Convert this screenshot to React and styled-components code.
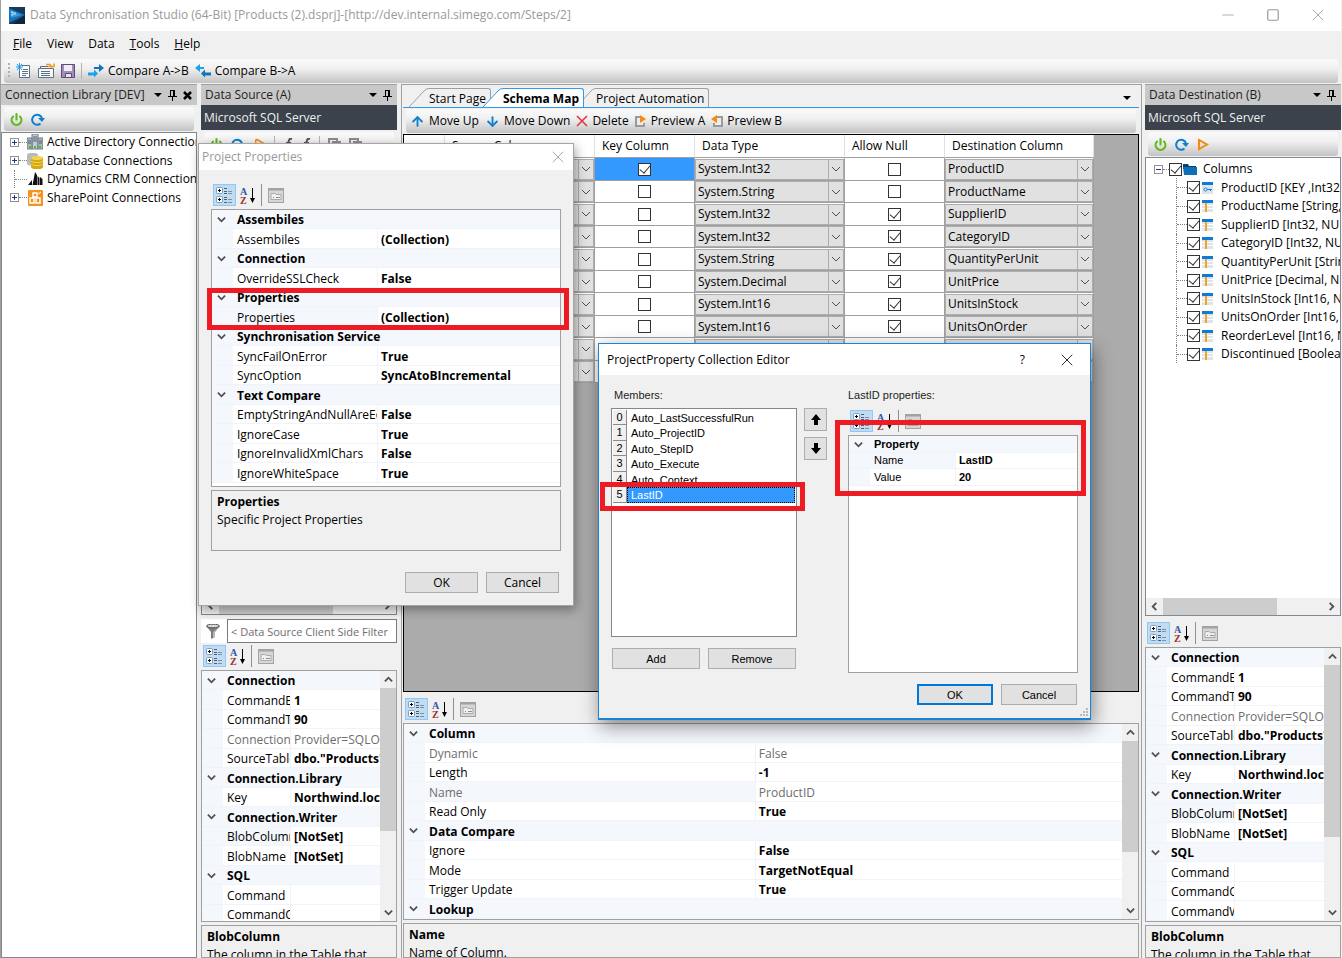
import React from 'react';
import styled, { createGlobalStyle, css } from 'styled-components';
import { Power, Play, X, Minus, Square, ArrowUp, ArrowDown } from 'lucide-react';

const GlobalStyle = createGlobalStyle`
    *{
        box-sizing: border-box;
    }
    body{
        margin: 0;
        overflow: hidden;
        background-color: #f0f0f0;
        font-family: "Open Sans", "Noto Sans", sans-serif;
        font-size: 12px;
        line-height: 16px;
        color: #000;
    }
    button, input, select{
        font: inherit;
        color: inherit;
        margin: 0;
        padding: 0;
    }
    svg{
        flex: none;
        display: block;
    }
`

/* ---------- data ---------- */

const sourceProps = [
    { group: "Connection" },
    { name: "CommandBatchSize", value: "1" },
    { name: "CommandTimeout", value: "90" },
    { name: "ConnectionString", value: "Provider=SQLOLEDB", muted: true },
    { name: "SourceTable", value: 'dbo."Products"' },
    { group: "Connection.Library" },
    { name: "Key", value: "Northwind.local" },
    { group: "Connection.Writer" },
    { name: "BlobColumn", value: "[NotSet]", selected: true },
    { name: "BlobName", value: "[NotSet]" },
    { group: "SQL" },
    { name: "Command", value: "" },
    { name: "CommandCount", value: "" },
    { name: "CommandWhere", value: "" },
];

const columnProps = [
    { group: "Column" },
    { name: "Dynamic", value: "False", muted: true },
    { name: "Length", value: "-1" },
    { name: "Name", value: "ProductID", muted: true, selected: true },
    { name: "Read Only", value: "True" },
    { group: "Data Compare" },
    { name: "Ignore", value: "False" },
    { name: "Mode", value: "TargetNotEqual" },
    { name: "Trigger Update", value: "True" },
    { group: "Lookup" },
];

const projectProps = [
    { group: "Assembiles" },
    { name: "Assembiles", value: "(Collection)" },
    { group: "Connection" },
    { name: "OverrideSSLCheck", value: "False" },
    { group: "Properties" },
    { name: "Properties", value: "(Collection)", selected: true },
    { group: "Synchronisation Service" },
    { name: "SyncFailOnError", value: "True" },
    { name: "SyncOption", value: "SyncAtoBIncremental" },
    { group: "Text Compare" },
    { name: "EmptyStringAndNullAreEqual", value: "False" },
    { name: "IgnoreCase", value: "True" },
    { name: "IgnoreInvalidXmlChars", value: "False" },
    { name: "IgnoreWhiteSpace", value: "True" },
];

const memberProps = [
    { group: "Property" },
    { name: "Name", value: "LastID", selected: true },
    { name: "Value", value: "20" },
];

const members = ["Auto_LastSuccessfulRun", "Auto_ProjectID", "Auto_StepID", "Auto_Execute", "Auto_Context", "LastID"];

const schema = [
    { name: "ProductID", type: "System.Int32", isKey: true, allowNull: false },
    { name: "ProductName", type: "System.String", allowNull: false },
    { name: "SupplierID", type: "System.Int32", allowNull: true },
    { name: "CategoryID", type: "System.Int32", allowNull: true },
    { name: "QuantityPerUnit", type: "System.String", allowNull: true },
    { name: "UnitPrice", type: "System.Decimal", allowNull: true },
    { name: "UnitsInStock", type: "System.Int16", allowNull: true },
    { name: "UnitsOnOrder", type: "System.Int16", allowNull: true },
    { name: "ReorderLevel", type: "System.Int16", allowNull: true },
    { name: "Discontinued", type: "System.Boolean", allowNull: false },
];

const destColumns = [
    "ProductID [KEY ,Int32, NOT NULL]",
    "ProductName [String, NOT NULL]",
    "SupplierID [Int32, NULL]",
    "CategoryID [Int32, NULL]",
    "QuantityPerUnit [String, NULL]",
    "UnitPrice [Decimal, NULL]",
    "UnitsInStock [Int16, NULL]",
    "UnitsOnOrder [Int16, NULL]",
    "ReorderLevel [Int16, NULL]",
    "Discontinued [Boolean, NOT NULL]",
];

/* ---------- icons ---------- */

const AppLogo = () => (
    <svg width="16" height="17" viewBox="0 0 16 17">
        <rect width="16" height="17" fill="#17395c"/>
        <path d="M0 1 L16 8 L0 16Z" fill="#1b6fb0"/>
        <path d="M1 3 L13 8 L2 11Z" fill="#2b9ade"/>
        <path d="M16 8 L16 17 L4 17Z" fill="#10263d"/>
        <path d="M2 5h2v3h-2M6 5v3" stroke="#cfe8fa" fill="none"/>
    </svg>
)

const Chevron = ({ dir = "down", size = 9, width = 2, color = "#505050" }) => {
    const d = { down: "M1 3l4 4 4-4", up: "M1 7l4-4 4 4", left: "M7 1L3 5l4 4", right: "M3 1l4 4-4 4" }[dir];
    return <svg width={size} height={size} viewBox="0 0 10 10"><path d={d} fill="none" stroke={color} strokeWidth={width}/></svg>
}

const Caret = () => <svg width="8" height="4" viewBox="0 0 8 4"><path d="M0 0h8L4 4z"/></svg>

const Pin = () => (
    <svg width="9" height="11" viewBox="0 0 9 11">
        <path d="M2 0h5v6h2v1H5v4H4V7H0V6h2zM3 1v5h2V1z" fillRule="evenodd"/>
    </svg>
)

const NewIcon = () => (
    <svg width="16" height="16" viewBox="0 0 16 16">
        <path d="M5.500 2.500h8v12h-10v-7" fill="#fff" stroke="#5d7186"/>
        <path d="M7 6.500h5M6 8.500h6M6 10.500h6M6 12.500h4" stroke="#5d7186"/>
        <path d="M3.500 0v8M0 4h7M1 1l5 6M6 1L1 7" stroke="#1e9be8"/>
    </svg>
)

const OpenIcon = () => (
    <svg width="17" height="16" viewBox="0 0 17 16">
        <path d="M2.500 6V3.500h8" fill="none" stroke="#5d7186"/>
        <path d="M.5 5.500h15v9H.5z" fill="#f8f8f8" stroke="#5d7186"/>
        <path d="M3 8.500h9M3 10.500h9M3 12.500h9" stroke="#5d7186"/>
        <path d="M8 1.500h4l2 3M11 3.500h5v-3" fill="none" stroke="#f29a1f" strokeWidth="1.500"/>
    </svg>
)

const SaveIcon = () => (
    <svg width="14" height="14" viewBox="0 0 14 14">
        <path d="M.5.5h13v13H.5z" fill="#a18db8" stroke="#5d4b73"/>
        <path d="M3 1h8v6H3z" fill="#f1edf6"/>
        <path d="M4.500 9.500h6v4h-6z" fill="#e9e4ef" stroke="#5d4b73"/>
    </svg>
)

const CompareIcon = ({ flip }) => (
    <svg width="16" height="14" viewBox="0 0 16 14">
        {flip
            ? <g><path d="M0 4l5-4v3h4v2H5v3z" fill="#1da0ef"/><path d="M6 9.500l4-4v3h6v3h-6v2z" fill="#1273b8"/></g>
            : <g><path d="M16 4l-5-4v3H6v2h5v3z" fill="#1273b8"/><path d="M10 9.500L6 5.500v3H0v3h6v2z" fill="#1da0ef"/></g>}
    </svg>
)

const PowerIcon = () => <Power size={13} strokeWidth={4} color="#62b91d"/>

const RefreshIcon = () => (
    <svg width="14" height="13" viewBox="0 0 14 13">
        <path d="M9.500 10.500a5 5 0 1 1 1.500-5" fill="none" stroke="#0d80d0" strokeWidth="2"/>
        <path d="M7 5h7l-3 4z" fill="#0d80d0"/>
    </svg>
)

const PlayIcon = () => (
    <svg width="12" height="13" viewBox="0 0 12 13">
        <path d="M2 2v9l8-4.500z" fill="none" stroke="#f58a0b" strokeWidth="2"/>
    </svg>
)

const CopyIcon = () => (
    <svg width="13" height="13" viewBox="0 0 13 13"><path d="M1 1h8v9H1zM5 4h7v8H5z" fill="none" stroke="#8c8c8c" strokeWidth="2"/></svg>
)

const HookIcon = () => (
    <svg width="10" height="13" viewBox="0 0 10 13"><path d="M9 1C6 0 6 2 5 6s-1 6-4 6M3 5h5" fill="none" stroke="#555" strokeWidth="2"/></svg>
)

const PreviewIcon = ({ flip }) => (
    <svg width="12" height="12" viewBox="0 0 12 12">
        {flip
            ? <g><path d="M6 2h5v9H3V8" fill="#ececec" stroke="#9a9a9a" strokeWidth="2"/><path d="M0 4l6-4v8z" fill="#f68b12"/></g>
            : <g><path d="M6 2H1v9h8V8" fill="#ececec" stroke="#9a9a9a" strokeWidth="2"/><path d="M11 4L5 0v8z" fill="#f68b12"/></g>}
    </svg>
)

const DeleteIcon = () => (
    <svg width="12" height="12" viewBox="0 0 12 12"><path d="M1 1l10 10M11 1L1 11" stroke="#e0343c" strokeWidth="1.500"/></svg>
)

const CategorizedIcon = () => (
    <svg width="17" height="17" viewBox="0 0 17 17">
        <rect x=".5" y=".5" width="6" height="6" rx="1" fill="#fff" stroke="#7d9dbf"/>
        <rect x=".5" y="9.500" width="6" height="6" rx="1" fill="#fff" stroke="#7d9dbf"/>
        <path d="M2 3.500h3M3.500 2v3M2 12.500h3M3.500 11v3" stroke="#000"/>
        <path d="M8 1.500h3M8 4.500h3M8 6.500h3M8 10.500h3M8 12.500h3M8 15.500h3" stroke="#4f5f70"/>
        <path d="M12 4.500h4M12 6.500h4M12 12.500h4M12 15.500h4" stroke="#7f8fa0"/>
    </svg>
)

const SortIcon = () => (
    <svg width="17" height="17" viewBox="0 0 17 17">
        <text x="0" y="8" fontSize="10" fontWeight="700" fontFamily="Liberation Serif, serif" fill="#2f55a8">A</text>
        <text x="0" y="17" fontSize="10" fontWeight="700" fontFamily="Liberation Serif, serif" fill="#9c2b2b">Z</text>
        <path d="M12.500 1v12" stroke="#000"/>
        <path d="M10 11h5l-2.500 5z"/>
    </svg>
)

const PagesIcon = () => (
    <svg width="16" height="15" viewBox="0 0 16 15">
        <rect x=".5" y=".5" width="15" height="14" fill="#d6d6d6" stroke="#a3a3a3"/>
        <path d="M0 1.500h16" stroke="#a3a3a3" strokeWidth="2"/>
        <path d="M3 5.500h4l1 1h5v5H3z" fill="#efefef" stroke="#aaa"/>
        <path d="M5 9.500h1M8 9.500h4" stroke="#8f8f8f"/>
    </svg>
)

const FunnelIcon = () => (
    <svg width="14" height="15" viewBox="0 0 14 15">
        <path d="M0 2l5 6v7l4-2V8l5-6z" fill="#7c7c7c"/>
        <path d="M7 8v6l2-1V8l4-5z" fill="#b9b9b9"/>
        <ellipse cx="7" cy="2" rx="6.500" ry="1.800" fill="#d8d8d8" stroke="#555"/>
    </svg>
)

const ServersIcon = () => (
    <svg width="16" height="16" viewBox="0 0 16 16">
        <path d="M5 0h6v15H5z" fill="#c3ccd4" stroke="#6d7a86"/>
        <path d="M0 4h5v11H0zM11 4h5v11h-5z" fill="#aab5bf" stroke="#6d7a86"/>
        <path d="M6 3h4M6 5h4M6 7h4M1 7h3M1 9h3M12 7h3M12 9h3" stroke="#51606d"/>
        <path d="M2 12h2v2H2zM7 12h2v2H7zM12 12h2v2h-2z" fill="#4bc01a"/>
    </svg>
)

const DatabaseIcon = () => (
    <svg width="16" height="16" viewBox="0 0 16 16">
        <path d="M0 2c0-3 11-3 11 0v9c0 2-11 2-11 0z" fill="#b6bdc2"/>
        <path d="M4 5c0-2 12-2 12 0v9c0 3-12 3-12 0z" fill="#d6a912"/>
        <ellipse cx="10" cy="5" rx="6" ry="2" fill="#f2d452"/>
        <path d="M4 8c1 2 11 2 12 0M4 11c1 2 11 2 12 0" fill="none" stroke="#f2d452"/>
    </svg>
)

const CrmIcon = () => (
    <svg width="15" height="14" viewBox="0 0 15 14">
        <path d="M0 13l4-5v5zM4.500 13L7 0l2 3v10zM9.500 13V4l2 2v7zM12 13V5l2.500 2v6z" fill="#111"/>
    </svg>
)

const SharePointIcon = () => (
    <svg width="15" height="16" viewBox="0 0 15 16">
        <rect width="15" height="16" rx="1" fill="#f6921e"/>
        <path d="M2 8h4v5H2zM8 8h4v5H8zM5 3h4v4H5z" fill="none" stroke="#fff" strokeWidth="1.500"/>
        <path d="M10 4l3-2" stroke="#fff"/>
    </svg>
)

const FolderIcon = () => (
    <svg width="14" height="13" viewBox="0 0 14 13">
        <path d="M0 1h5l1 2h7v3H0z" fill="#0b3f70"/>
        <path d="M0 4h14v8H1z" fill="#0f6fb8"/>
    </svg>
)

const ColumnIcon = ({ isKey }) => (
    <svg width="11" height="12" viewBox="0 0 11 12">
        <rect width="11" height="12" fill="#dfe4e6"/>
        <rect width="11" height="3" fill="#0c7bdc"/>
        {isKey
            ? <g><circle cx="3.500" cy="7.500" r="1.500" fill="#fff" stroke="#0c7bdc"/><path d="M5 7.500h5M8.500 7v2" stroke="#0c7bdc"/></g>
            : <g><path d="M0 5.500h11M0 8.500h11" stroke="#fff"/><path d="M4 3v9" stroke="#f3a41b" strokeWidth="2"/></g>}
    </svg>
)

/* ---------- shared parts ---------- */

const IconButton = styled.button`
    display: flex;
    align-items: center;
    justify-content: center;
    border: 0;
    background: none;
`

const StripBar = styled.div`
    display: flex;
    align-items: center;
    flex: none;
    gap: ${props => props.$tight ? 6 : 8}px;
    height: 24px;
    margin: ${props => props.$top || 2}px 3px 1px;
    padding: 0 ${props => props.$tight ? 4 : 6}px;
    border-radius: 3px;
    background: linear-gradient(#fafafa, #f0f0f0 40%, #c3c3c3);
`

const StripButton = styled(IconButton)`
    gap: 4px;
    white-space: nowrap;
`

const ArrowSlot = styled.span`
    width: 15px;
`

const Divider = styled.span`
    width: 1px;
    height: ${props => props.$tall ? 22 : 16}px;
    margin-right: ${props => props.$tall ? 5 : 0}px;
    background-color: ${props => props.$tall ? "#8f8f8f" : "#b4b4b4"};
`

const Grip = styled.span`
    width: 2px;
    height: 16px;
    background: repeating-linear-gradient(#b0b0b0 0 2px, transparent 2px 4px);
`

const PaneHeader = styled.header`
    display: flex;
    align-items: center;
    flex: none;
    gap: 6px;
    height: 21px;
    padding: 0 5px 0 4px;
    border-top: 1px solid #a0a0a0;
    background-color: #c8c8c8;
    color: #1e1e1e;
    h2{
        flex: 1;
        margin: 0;
        font-size: 12px;
        font-weight: 400;
        white-space: nowrap;
    }
`

const Provider = styled.div`
    flex: none;
    height: 25px;
    padding: 0 3px;
    background-color: #3b424b;
    color: #f0f0f0;
    line-height: 25px;
`

const Sunken = styled.div`
    display: flex;
    flex-direction: column;
    flex: 1;
    min-height: 0;
    overflow: hidden;
    border: 1px solid #828790;
    background-color: #fff;
`

const CheckBox = styled.input.attrs({ type: "checkbox" })`
    appearance: none;
    display: flex;
    justify-content: center;
    flex: none;
    width: 13px;
    height: 13px;
    border: 1px solid #333;
    background-color: #fff;
    &:checked::before{
        content: "";
        width: 5px;
        height: 9px;
        margin-top: -1px;
        border: solid #333;
        border-width: 0 1px 1px 0;
        transform: rotate(40deg);
    }
`

/* ---------- scroll bars ---------- */

const Track = styled.div`
    display: flex;
    flex: none;
    flex-direction: ${props => props.$across ? "row" : "column"};
    ${props => props.$across ? "height: 17px;" : "width: 16px;"}
    background-color: #f0f0f0;
`

const Arrow = styled.span`
    display: flex;
    align-items: center;
    justify-content: center;
    width: 17px;
    height: 17px;
`

const Thumb = styled.span`
    flex: 0 0 ${props => props.$part}%;
    background-color: #cdcdcd;
`

const Spacer = styled.span`
    flex: 1;
`

const ScrollBar = ({ across, part }) => (
    <Track $across={across} aria-hidden="true">
        <Arrow><Chevron dir={across ? "left" : "up"}/></Arrow>
        <Thumb $part={part}/>
        <Spacer/>
        <Arrow><Chevron dir={across ? "right" : "down"}/></Arrow>
    </Track>
)

/* ---------- property grid ---------- */

const PropBar = styled.div`
    display: flex;
    align-items: center;
    flex: none;
    gap: 1px;
    height: 27px;
    padding: 2px 2px 3px;
`

const PropButton = styled(IconButton)`
    width: 23px;
    height: 22px;
    ${props => props.$on && css`
        border: 1px solid #90c8f6;
        background-color: #c0dcf3;
    `}
`

const PropFrame = styled.div`
    display: flex;
    flex: none;
    height: ${props => props.$height}px;
    overflow: hidden;
    border: 1px solid #a0a0a0;
    background-color: #fff;
`

const PropBody = styled.div`
    flex: 1;
    min-width: 0;
    overflow: hidden;
`

const PropTable = styled.table`
    width: 100%;
    table-layout: fixed;
    border-collapse: separate;
    border-spacing: 0;
    tr{
        height: ${props => props.$compact ? 17 : 19}px;
    }
    tr:nth-child(even){
        height: ${props => props.$compact ? 16 : 20}px;
    }
    th, td{
        padding: ${props => props.$compact ? 0 : 1}px 0 0 4px;
        line-height: 15px;
        text-align: left;
        font-weight: 700;
        white-space: nowrap;
        overflow: hidden;
        border-bottom: 1px solid #f0f3f9;
    }
    .gutter{
        padding: 0 0 0 5px;
    }
`

const GroupRow = styled.tr`
    background-color: #f4f7fc;
`

const PropRow = styled.tr`
    th, td{
        color: ${props => props.$muted ? "#6d6d6d" : "#000"};
    }
    th{
        font-weight: 400;
        border-right: 1px solid #f0f3f9;
        background-color: ${props => props.$selected ? "#f4f7fc" : "#fff"};
    }
    td{
        padding-left: 3px;
        font-weight: ${props => props.$muted ? 400 : 700};
    }
    .gutter{
        background-color: #f4f7fc;
    }
`

const PropTools = () => (
    <PropBar>
        <PropButton $on aria-label="Categorized"><CategorizedIcon/></PropButton>
        <PropButton aria-label="Alphabetical"><SortIcon/></PropButton>
        <Divider $tall/>
        <IconButton aria-label="Property Pages"><PagesIcon/></IconButton>
    </PropBar>
)

const PropGrid = ({ rows, height, nameWidth, valueWidth, compact, scroll }) => (
    <PropFrame $height={height}>
        <PropBody>
            <PropTable $compact={compact}>
                <colgroup>
                    <col width="21"/>
                    <col width={nameWidth}/>
                    <col width={valueWidth}/>
                </colgroup>
                <tbody>
                    {rows.map((row, i) => row.group
                        ? <GroupRow key={i}>
                            <td className="gutter"><IconButton aria-label={`Collapse ${row.group}`}><Chevron/></IconButton></td>
                            <th colSpan="2" scope="rowgroup">{row.group}</th>
                        </GroupRow>
                        : <PropRow key={i} $muted={row.muted} $selected={row.selected}>
                            <td className="gutter"/>
                            <th scope="row">{row.name}</th>
                            <td>{row.value}</td>
                        </PropRow>
                    )}
                </tbody>
            </PropTable>
        </PropBody>
        {scroll && <ScrollBar part={scroll}/>}
    </PropFrame>
)

const HelpBox = styled.section`
    flex: none;
    height: ${props => props.$height}px;
    margin-top: 3px;
    padding: 2px 5px;
    overflow: hidden;
    border: 1px solid #a0a0a0;
    h3, p{
        margin: 0;
        font-size: 12px;
        line-height: 18px;
        white-space: nowrap;
    }
`

/* ---------- trees ---------- */

const Tree = styled.ul`
    flex: 1;
    margin: 0;
    padding: ${props => props.$pad}px 0 0 8px;
    list-style-type: none;
    overflow: hidden;
`

const TreeRow = styled.li`
    display: flex;
    align-items: center;
    height: 18px;
    padding-left: ${props => props.$level ? 11 : 0}px;
    white-space: nowrap;
    > *{
        flex: none;
    }
    &:nth-child(even){
        height: 19px;
    }
`

const Expander = styled(IconButton)`
    width: 9px;
    height: 9px;
    border: 1px solid #919191;
    background-color: #fff;
    color: #1d3c8f;
`

const Dots = styled.span`
    width: ${props => props.$wide ? 8 : 6}px;
    border-top: 1px dotted #808080;
`

const Branch = styled.span`
    display: flex;
    align-items: center;
    width: ${props => props.$wide ? 13 : 11}px;
    height: 100%;
    margin-left: ${props => props.$wide ? 4 : 11}px;
    border-left: 1px dotted #808080;
    &::after{
        content: "";
        flex: 1;
        border-top: 1px dotted #808080;
    }
`

const NodeIcon = styled.span`
    display: flex;
    justify-content: center;
    flex: none;
    width: ${props => props.$small ? 15 : 16}px;
    margin-right: ${props => props.$small ? 6 : 4}px;
`

const NodeLabel = styled.label`
    display: flex;
    align-items: center;
`

const PlusMinus = ({ open }) => (
    <svg width="5" height="5" viewBox="0 0 5 5"><path d={open ? "M0 2.500h5" : "M0 2.500h5M2.500 0v5"} stroke="currentColor"/></svg>
)

/* ---------- main window ---------- */

const AppWindow = styled.main`
    display: flex;
    flex-direction: column;
    height: 100vh;
    overflow: hidden;
    border-left: 1px solid #a0a0a0;
    padding-right: 1px;
    background-color: #f0f0f0;
`

const TitleBar = styled.header`
    display: flex;
    align-items: center;
    flex: none;
    gap: 5px;
    height: 31px;
    padding: 0 1px 1px 8px;
    background-color: #fff;
    color: #999;
    h1{
        flex: 1;
        margin: 0;
        font-size: 12px;
        font-weight: 400;
    }
`

const WindowButtons = styled.div`
    display: flex;
    button{
        width: 45px;
        height: 30px;
    }
`

const MenuBar = styled.nav`
    display: flex;
    flex: none;
    gap: 1px;
    height: 26px;
    padding: 0 5px;
    button{
        padding: 0 7px;
        border: 0;
        background: none;
    }
`

const Workspace = styled.div`
    display: flex;
    flex: 1;
    min-height: 0;
`

const SidePane = styled.section`
    display: flex;
    flex-direction: column;
    flex: none;
    width: 196px;
    margin-left: ${props => props.$gap || 0}px;
    ${Sunken}{
        margin-bottom: ${props => props.$flush ? 0 : 4}px;
    }
`

const CenterPane = styled.section`
    display: flex;
    flex-direction: column;
    flex: 1;
    min-width: 0;
    margin-left: 4px;
    padding: 0 2px 0 1px;
    border: 1px solid #a0a0a0;
    border-bottom: 0;
`

const FilterRow = styled.div`
    display: flex;
    align-items: center;
    flex: none;
    gap: 7px;
    padding-left: 5px;
    background-color: #fff;
    input{
        flex: 1;
        min-width: 0;
        height: 24px;
        padding: 0 3px;
        border: 1px solid #7a7a7a;
        font-size: 11px;
    }
    input::placeholder{
        color: #6d6d6d;
        opacity: 1;
    }
`

const TabBar = styled.div`
    display: flex;
    align-items: flex-end;
    flex: none;
    height: 23px;
    padding: 0 8px 0 14px;
    border-bottom: 1px solid #3399e8;
`

const TabMenu = styled(IconButton)`
    height: 19px;
`

const TabButton = styled.button`
    display: flex;
    height: 19px;
    margin-left: -8px;
    border: 0;
    background: none;
    font-weight: ${props => props.$active ? 700 : 400};
    position: relative;
    z-index: ${props => props.$active ? 1 : 0};
    span{
        height: 100%;
        padding-right: 4px;
        border: solid ${props => props.$active ? "#3399e8" : "#a0a0a0"};
        border-width: 1px 1px 0 0;
        border-top-right-radius: 3px;
        background-color: ${props => props.$active ? "#fff" : "#f0f0f0"};
        line-height: 20px;
        white-space: nowrap;
    }
`

const Tab = ({ label, active }) => (
    <TabButton role="tab" aria-selected={!!active} $active={active}>
        <svg width="20" height="19" viewBox="0 0 20 19">
            <path d="M0 19L15 3Q17 .500 20 .500V19" fill={active ? "#fff" : "#f0f0f0"} stroke="none"/>
            <path d="M0 19L15 3Q17 .500 20 .500" fill="none" stroke={active ? "#3399e8" : "#a0a0a0"}/>
        </svg>
        <span>{label}</span>
    </TabButton>
)

const GridFrame = styled.div`
    flex: 1;
    min-height: 0;
    margin-bottom: 4px;
    overflow: hidden;
    border: 1px solid #000;
    background-color: #ababab;
`

const DataTable = styled.table`
    width: 690px;
    table-layout: fixed;
    border-collapse: separate;
    border-spacing: 0;
    background-color: #fff;
    thead tr{
        height: 23px;
    }
    tbody tr{
        height: 23px;
    }
    tbody tr:nth-child(even){
        height: 22px;
    }
    th, td{
        padding: 0;
        border-right: 1px solid #a0a0a0;
        border-bottom: 1px solid #a0a0a0;
    }
    thead th{
        padding-left: 7px;
        border-right-color: #e0e0e0;
        text-align: left;
        font-weight: 400;
    }
`

const CheckCell = styled.td`
    background-color: ${props => props.$selected ? "#3399ff" : "#fff"};
    input{
        margin: 0 auto;
    }
`

const Combo = styled.div`
    display: flex;
    align-items: center;
    gap: 2px;
    height: 21px;
    padding-right: 2px;
    border: 1px solid #adadad;
    background-color: #e1e1e1;
    select{
        appearance: none;
        flex: 1;
        align-self: stretch;
        min-width: 0;
        padding-left: 2px;
        border: 0;
        border-right: 1px solid #adadad;
        background: none;
    }
`

const ComboCell = ({ label, value }) => (
    <td>
        <Combo>
            <select aria-label={label} defaultValue={value}>
                <option>{value}</option>
            </select>
            <Chevron size={10} width={1}/>
        </Combo>
    </td>
)

/* ---------- dialogs ---------- */

const Dialog = styled.section`
    position: absolute;
    display: flex;
    flex-direction: column;
    background-color: #f0f0f0;
`

const ProjectWindow = styled(Dialog)`
    left: 198px;
    top: 143px;
    width: 376px;
    border: 1px solid #a5a5a5;
    box-shadow: 2px 4px 10px rgba(0, 0, 0, 0.35);
`

const EditorWindow = styled(Dialog)`
    left: 598px;
    top: 343px;
    width: 493px;
    border: 1px solid #1883d7;
    border-bottom-width: 2px;
    box-shadow: 2px 6px 18px rgba(0, 0, 0, 0.45);
`

const DialogTitle = styled.header`
    display: flex;
    align-items: center;
    height: ${props => props.$tall ? 31 : 26}px;
    padding: 0 ${props => props.$tall ? 13 : 5}px 0 ${props => props.$tall ? 8 : 3}px;
    gap: 32px;
    background-color: #fff;
    color: ${props => props.$inactive ? "#999" : "#000"};
    h2{
        flex: 1;
        margin: 0;
        font-size: 12px;
        font-weight: 400;
    }
`

const ProjectBody = styled.div`
    display: flex;
    flex-direction: column;
    padding: 12px;
`

const ButtonRow = styled.div`
    display: flex;
    justify-content: flex-end;
    gap: 8px;
    padding: ${props => props.$pad};
`

const PushButton = styled.button`
    width: ${props => props.$wide}px;
    height: 21px;
    border: ${props => props.$primary ? "2px solid #0078d7" : "1px solid #adadad"};
    background-color: #e1e1e1;
`

const EditorBody = styled.div`
    display: grid;
    grid-template-columns: 186px 23px 1fr;
    column-gap: 7px;
    padding: 12px 12px 0;
    font-family: "Liberation Sans", Arial, sans-serif;
    font-size: 11px;
`

const EditorColumn = styled.div`
    display: flex;
    flex-direction: column;
    padding-left: ${props => props.$inset || 0}px;
`

const Caption = styled.h3`
    height: 16px;
    margin: 0 0 5px;
    padding-left: ${props => props.$inset || 0}px;
    font-size: 11px;
    font-weight: 400;
    color: #1e1e1e;
`

const MemberList = styled.ul`
    height: 229px;
    margin: 0;
    padding: 1px;
    border: 1px solid #828790;
    background-color: #fff;
    list-style-type: none;
`

const Member = styled.li`
    display: flex;
    height: 15px;
    line-height: 15px;
    &:nth-child(even){
        height: 16px;
    }
    b{
        width: 14px;
        border: solid #8c8c8c;
        border-width: 0 1px 1px 0;
        background-color: #f0f0f0;
        font-weight: 400;
        text-align: center;
    }
    span{
        flex: 1;
        padding-left: 3px;
        border: 1px ${props => props.$selected ? "dotted #000" : "solid transparent"};
        background-color: ${props => props.$selected ? "#3399ff" : "#fff"};
        color: ${props => props.$selected ? "#fff" : "#000"};
        line-height: 14px;
    }
`

const MoveButtons = styled.div`
    display: flex;
    flex-direction: column;
    gap: 6px;
    padding-top: 21px;
    button{
        height: 23px;
        border: 1px solid #adadad;
        background-color: #e1e1e1;
    }
`

const MoveIcon = ({ down }) => (
    <svg width="10" height="11" viewBox="0 0 10 11">
        <path d={down ? "M3 0h4v5h3L5 11 0 5h3z" : "M3 11h4V6h3L5 0 0 6h3z"}/>
    </svg>
)

const GripDots = styled.svg`
    align-self: flex-end;
    margin: 3px 2px 2px 0;
`

const Highlight = styled.span`
    position: absolute;
    border: 5px solid #ed1c24;
    pointer-events: none;
`

const PropertiesHighlight = styled(Highlight)`
    left: 8px;
    top: 144px;
    width: 362px;
    height: 42px;
`

const MemberHighlight = styled(Highlight)`
    left: 1px;
    top: 138px;
    width: 205px;
    height: 29px;
`

const ValueHighlight = styled(Highlight)`
    left: 236px;
    top: 76px;
    width: 251px;
    height: 76px;
`

/* ---------- panes ---------- */

const PaneButtons = ({ closable }) => (
    <>
        <IconButton aria-label="Window position"><Caret/></IconButton>
        <IconButton aria-label="Auto hide"><Pin/></IconButton>
        {closable && (
            <IconButton aria-label="Close">
                <svg width="9" height="9" viewBox="0 0 9 9"><path d="M1 1l7 7M8 1L1 8" stroke="#000" strokeWidth="2.500"/></svg>
            </IconButton>
        )}
    </>
)

const Library = () => {
    const nodes = [
        { label: "Active Directory Connections", icon: <ServersIcon/>, expandable: true },
        { label: "Database Connections", icon: <DatabaseIcon/>, expandable: true },
        { label: "Dynamics CRM Connections", icon: <CrmIcon/> },
        { label: "SharePoint Connections", icon: <SharePointIcon/>, expandable: true },
    ];
    return(
        <SidePane $flush>
            <PaneHeader><h2>Connection Library [DEV]</h2><PaneButtons closable/></PaneHeader>
            <StripBar>
                <IconButton aria-label="Connect"><PowerIcon/></IconButton>
                <IconButton aria-label="Refresh"><RefreshIcon/></IconButton>
            </StripBar>
            <Sunken>
                <Tree $pad={0}>
                    {nodes.map(node => (
                        <TreeRow key={node.label}>
                            {node.expandable
                                ? <><Expander aria-label={`Expand ${node.label}`}><PlusMinus/></Expander><Dots $wide/></>
                                : <Branch $wide/>}
                            <NodeIcon>{node.icon}</NodeIcon>
                            {node.label}
                        </TreeRow>
                    ))}
                </Tree>
            </Sunken>
        </SidePane>
    );
}

const BlobHelp = () => (
    <HelpBox $height={33}>
        <h3>BlobColumn</h3>
        <p>The column in the Table that</p>
    </HelpBox>
)

const Source = () => (
    <SidePane $gap={4}>
        <PaneHeader><h2>Data Source (A)</h2><PaneButtons/></PaneHeader>
        <Provider>Microsoft SQL Server</Provider>
        <StripBar>
            <IconButton aria-label="Connect"><PowerIcon/></IconButton>
            <IconButton aria-label="Refresh"><RefreshIcon/></IconButton>
            <IconButton aria-label="Preview"><Play size={13} strokeWidth={3} color="#f58a0b"/></IconButton>
            <Divider/>
            <IconButton aria-label="Add lookup"><HookIcon/></IconButton>
            <IconButton aria-label="Remove lookup"><HookIcon/></IconButton>
            <Divider/>
            <IconButton aria-label="Copy"><CopyIcon/></IconButton>
            <IconButton aria-label="Paste"><CopyIcon/></IconButton>
        </StripBar>
        <Sunken>
            <Spacer/>
            <ScrollBar across part={59}/>
        </Sunken>
        <FilterRow>
            <FunnelIcon/>
            <input aria-label="Data source filter" placeholder="< Data Source Client Side Filter"/>
        </FilterRow>
        <PropTools/>
        <PropGrid rows={sourceProps} height={252} nameWidth="68" scroll={57}/>
        <BlobHelp/>
    </SidePane>
)

const Destination = () => (
    <SidePane $gap={3}>
        <PaneHeader><h2>Data Destination (B)</h2><PaneButtons/></PaneHeader>
        <Provider>Microsoft SQL Server</Provider>
        <StripBar>
            <IconButton aria-label="Connect"><PowerIcon/></IconButton>
            <IconButton aria-label="Refresh"><RefreshIcon/></IconButton>
            <IconButton aria-label="Preview"><PlayIcon/></IconButton>
        </StripBar>
        <Sunken>
            <Tree $pad={2}>
                <TreeRow>
                    <Expander aria-label="Collapse Columns"><PlusMinus open/></Expander>
                    <Dots/>
                    <NodeLabel>
                        <CheckBox defaultChecked/>
                        <NodeIcon $small><FolderIcon/></NodeIcon>
                        Columns
                    </NodeLabel>
                </TreeRow>
                {destColumns.map((name, i) => (
                    <TreeRow key={name} $level={1}>
                        <Branch/>
                        <NodeLabel>
                            <CheckBox defaultChecked/>
                            <NodeIcon $small><ColumnIcon isKey={i === 0}/></NodeIcon>
                            {name}
                        </NodeLabel>
                    </TreeRow>
                ))}
            </Tree>
            <ScrollBar across part={59}/>
        </Sunken>
        <PropTools/>
        <PropGrid rows={sourceProps} height={275} nameWidth="68" scroll={63}/>
        <BlobHelp/>
    </SidePane>
)

const SchemaMap = () => (
    <CenterPane>
        <TabBar role="tablist">
            <Tab label="Start Page"/>
            <Tab label="Schema Map" active/>
            <Tab label="Project Automation"/>
            <Spacer/>
            <TabMenu aria-label="Open windows"><Caret/></TabMenu>
        </TabBar>
        <StripBar $tight $top={1}>
            <StripButton><ArrowUp size={15} strokeWidth={3} color="#0d80d0"/>Move Up</StripButton>
            <StripButton><ArrowDown size={15} strokeWidth={3} color="#0d80d0"/>Move Down</StripButton>
            <StripButton><DeleteIcon/>Delete</StripButton>
            <StripButton><PreviewIcon/>Preview A</StripButton>
            <StripButton><PreviewIcon flip/>Preview B</StripButton>
        </StripBar>
        <GridFrame>
            <DataTable>
                <colgroup>
                    <col width="41"/>
                    <col width="150"/>
                    <col width="100"/>
                    <col width="150"/>
                    <col width="100"/>
                    <col width="149"/>
                </colgroup>
                <thead>
                    <tr>
                        <th aria-label="Row"/>
                        <th>Source Column</th>
                        <th>Key Column</th>
                        <th>Data Type</th>
                        <th>Allow Null</th>
                        <th>Destination Column</th>
                    </tr>
                </thead>
                <tbody>
                    {schema.map(col => (
                        <tr key={col.name}>
                            <td/>
                            <ComboCell label="Source Column" value={col.name}/>
                            <CheckCell $selected={col.isKey}><CheckBox aria-label={`${col.name} key`} defaultChecked={col.isKey}/></CheckCell>
                            <ComboCell label="Data Type" value={col.type}/>
                            <CheckCell><CheckBox aria-label={`${col.name} allow null`} defaultChecked={col.allowNull}/></CheckCell>
                            <ComboCell label="Destination Column" value={col.name}/>
                        </tr>
                    ))}
                </tbody>
            </DataTable>
        </GridFrame>
        <PropTools/>
        <PropGrid rows={columnProps} height={197} valueWidth="51%" scroll={57}/>
        <HelpBox $height={35}>
            <h3>Name</h3>
            <p>Name of Column.</p>
        </HelpBox>
    </CenterPane>
)

const ProjectProperties = () => (
    <ProjectWindow role="dialog" aria-label="Project Properties">
        <DialogTitle $inactive>
            <h2>Project Properties</h2>
            <IconButton aria-label="Close"><X size={20} strokeWidth={1}/></IconButton>
        </DialogTitle>
        <ProjectBody>
            <PropTools/>
            <PropGrid rows={projectProps} height={278} nameWidth="145"/>
            <HelpBox $height={61}>
                <h3>Properties</h3>
                <p>Specific Project Properties</p>
            </HelpBox>
            <ButtonRow $pad="21px 2px 0 0">
                <PushButton $wide={73}>OK</PushButton>
                <PushButton $wide={73}>Cancel</PushButton>
            </ButtonRow>
        </ProjectBody>
        <PropertiesHighlight/>
    </ProjectWindow>
)

const CollectionEditor = () => (
    <EditorWindow role="dialog" aria-label="ProjectProperty Collection Editor">
        <DialogTitle $tall>
            <h2>ProjectProperty Collection Editor</h2>
            <IconButton aria-label="Help">?</IconButton>
            <IconButton aria-label="Close"><X size={20} strokeWidth={1}/></IconButton>
        </DialogTitle>
        <EditorBody>
            <EditorColumn>
                <Caption $inset={3}>Members:</Caption>
                <MemberList role="listbox" aria-label="Members">
                    {members.map((name, i) => (
                        <Member key={name} role="option" aria-selected={i === 5} $selected={i === 5}>
                            <b>{i}</b>
                            <span>{name}</span>
                        </Member>
                    ))}
                </MemberList>
                <ButtonRow $pad="11px 1px 0">
                    <PushButton $wide={88}>Add</PushButton>
                    <PushButton $wide={88}>Remove</PushButton>
                </ButtonRow>
            </EditorColumn>
            <MoveButtons>
                <IconButton aria-label="Move up"><MoveIcon/></IconButton>
                <IconButton aria-label="Move down"><MoveIcon down/></IconButton>
            </MoveButtons>
            <EditorColumn $inset={14}>
                <Caption>LastID properties:</Caption>
                <PropTools/>
                <PropGrid rows={memberProps} height={238} nameWidth="86" compact/>
                <ButtonRow $pad="11px 1px 0">
                    <PushButton $wide={76} $primary>OK</PushButton>
                    <PushButton $wide={76}>Cancel</PushButton>
                </ButtonRow>
            </EditorColumn>
        </EditorBody>
        <GripDots width="8" height="8" viewBox="0 0 8 8">
            <path d="M6 0h2v2H6zM3 3h2v2H3zM6 3h2v2H6zM0 6h2v2H0zM3 6h2v2H3zM6 6h2v2H6z" fill="#b8b8b8"/>
        </GripDots>
        <MemberHighlight/>
        <ValueHighlight/>
    </EditorWindow>
)

const App = () => {
    return(
        <>
            <GlobalStyle/>
            <AppWindow>
                <TitleBar>
                    <AppLogo/>
                    <h1>Data Synchronisation Studio (64-Bit) [Products (2).dsprj]-[http://dev.internal.simego.com/Steps/2]</h1>
                    <WindowButtons>
                        <IconButton aria-label="Minimize"><Minus size={18} strokeWidth={1}/></IconButton>
                        <IconButton aria-label="Maximize"><Square size={14} strokeWidth={2}/></IconButton>
                        <IconButton aria-label="Close"><X size={20} strokeWidth={1}/></IconButton>
                    </WindowButtons>
                </TitleBar>
                <MenuBar>
                    <button><u>F</u>ile</button>
                    <button>View</button>
                    <button>Data</button>
                    <button><u>T</u>ools</button>
                    <button><u>H</u>elp</button>
                </MenuBar>
                <StripBar $tight>
                    <Grip/>
                    <IconButton aria-label="New"><NewIcon/></IconButton>
                    <IconButton aria-label="Open"><OpenIcon/></IconButton>
                    <IconButton aria-label="Save"><SaveIcon/></IconButton>
                    <Divider/>
                    <StripButton><CompareIcon/>Compare A-&gt;B</StripButton>
                    <StripButton><CompareIcon flip/>Compare B-&gt;A</StripButton>
                </StripBar>
                <Workspace>
                    <Library/>
                    <Source/>
                    <SchemaMap/>
                    <Destination/>
                </Workspace>
            </AppWindow>
            <ProjectProperties/>
            <CollectionEditor/>
        </>
    );
}

export default App;
